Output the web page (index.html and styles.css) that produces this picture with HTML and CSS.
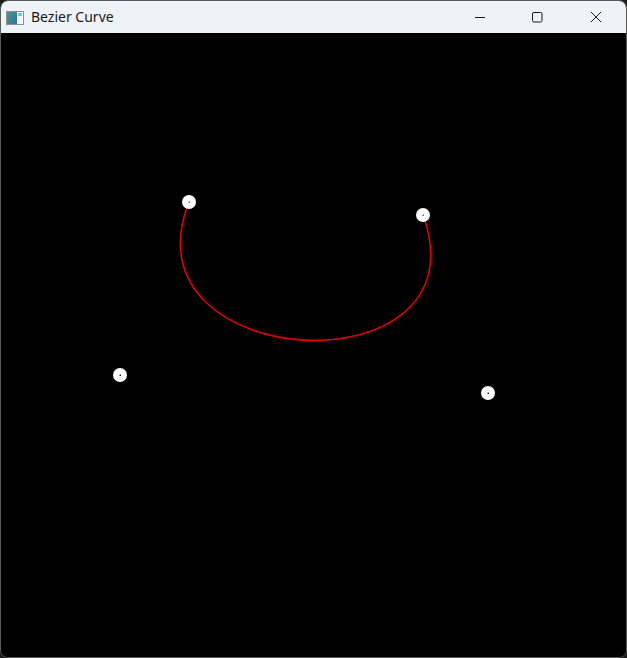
FILE: index.html
```html
<!DOCTYPE html>
<html>
<head>
<meta charset="utf-8">
<title>Bezier Curve</title>
<link rel="stylesheet" href="styles.css">
</head>
<body>
<div class="window">
  <div class="titlebar">
    <div class="title-left">
      <svg class="app-icon" width="18" height="14" viewBox="0 0 18 14">
        <defs>
          <linearGradient id="g" x1="0" y1="0" x2="1" y2="1">
            <stop offset="0" stop-color="#4a9a7e"/>
            <stop offset="1" stop-color="#2f6fb0"/>
          </linearGradient>
        </defs>
        <rect x="0.5" y="0.5" width="17" height="13" fill="#f4f6f8" stroke="#8a8f96"/>
        <rect x="1" y="1" width="10" height="12" fill="url(#g)"/>
        <rect x="12" y="2" width="4" height="3" fill="#7fc4b0"/>
      </svg>
      <span class="title">Bezier Curve</span>
    </div>
    <div class="controls">
      <div class="ctl min">
        <svg width="12" height="12" viewBox="0 0 12 12"><path d="M1 6.5H11" stroke="#1b1b1b" stroke-width="1"/></svg>
      </div>
      <div class="ctl max">
        <svg width="12" height="12" viewBox="0 0 12 12"><rect x="1.5" y="1.5" width="9.5" height="9.5" rx="1.5" fill="none" stroke="#1b1b1b" stroke-width="1"/></svg>
      </div>
      <div class="ctl close">
        <svg width="12" height="12" viewBox="0 0 12 12"><path d="M1 1L11 11M11 1L1 11" stroke="#1b1b1b" stroke-width="1"/></svg>
      </div>
    </div>
  </div>
  <svg class="canvas" viewBox="1 33 625 624" width="625" height="624">
    <rect x="1" y="33" width="625" height="624" fill="#000"/>
    <path d="M189 202 C120 375 488 393 423 215" fill="none" stroke="#e00000" stroke-width="1.6"/>
    <g fill="#ffffff">
      <circle cx="189" cy="202" r="7"/>
      <circle cx="423" cy="215" r="7"/>
      <circle cx="120" cy="375" r="7"/>
      <circle cx="488" cy="393" r="7"/>
    </g>
    <rect x="188.5" y="201.5" width="1.5" height="1.5" fill="#f03030"/>
    <rect x="422.5" y="214.5" width="1.5" height="1.5" fill="#f03030"/>
    <rect x="119.5" y="374.5" width="1.5" height="1.5" fill="#222"/>
    <rect x="487.5" y="392.5" width="1.5" height="1.5" fill="#222"/>
  </svg>
</div>
</body>
</html>
```

FILE: styles.css
```css
html, body {
  margin: 0;
  padding: 0;
  background: #1c1c1c;
}
body {
  width: 627px;
  height: 658px;
  overflow: hidden;
}
.window {
  width: 625px;
  height: 656px;
  border: 1px solid #5a5a5a;
  border-radius: 8px;
  overflow: hidden;
  background: #000;
  display: flex;
  flex-direction: column;
}
.titlebar {
  height: 32px;
  background: #eef2f9;
  display: flex;
  align-items: center;
  justify-content: space-between;
  flex-shrink: 0;
}
.title-left {
  display: flex;
  align-items: center;
  padding-left: 5px;
  gap: 7px;
}
.app-icon {
  display: block;
  margin-top: 1px;
}
.title {
  font-family: "Segoe UI", "Noto Sans", "Open Sans", sans-serif;
  font-size: 14px;
  color: #1a1a1a;
  line-height: 1;
  margin-top: -1px;
}
.controls {
  display: flex;
  height: 100%;
}
.ctl {
  height: 100%;
  display: flex;
  align-items: center;
  justify-content: center;
}
.ctl svg {
  display: block;
}
.min {
  width: 57px;
}
.max {
  width: 58px;
}
.close {
  width: 60px;
}
.canvas {
  display: block;
  flex-shrink: 0;
}
```
